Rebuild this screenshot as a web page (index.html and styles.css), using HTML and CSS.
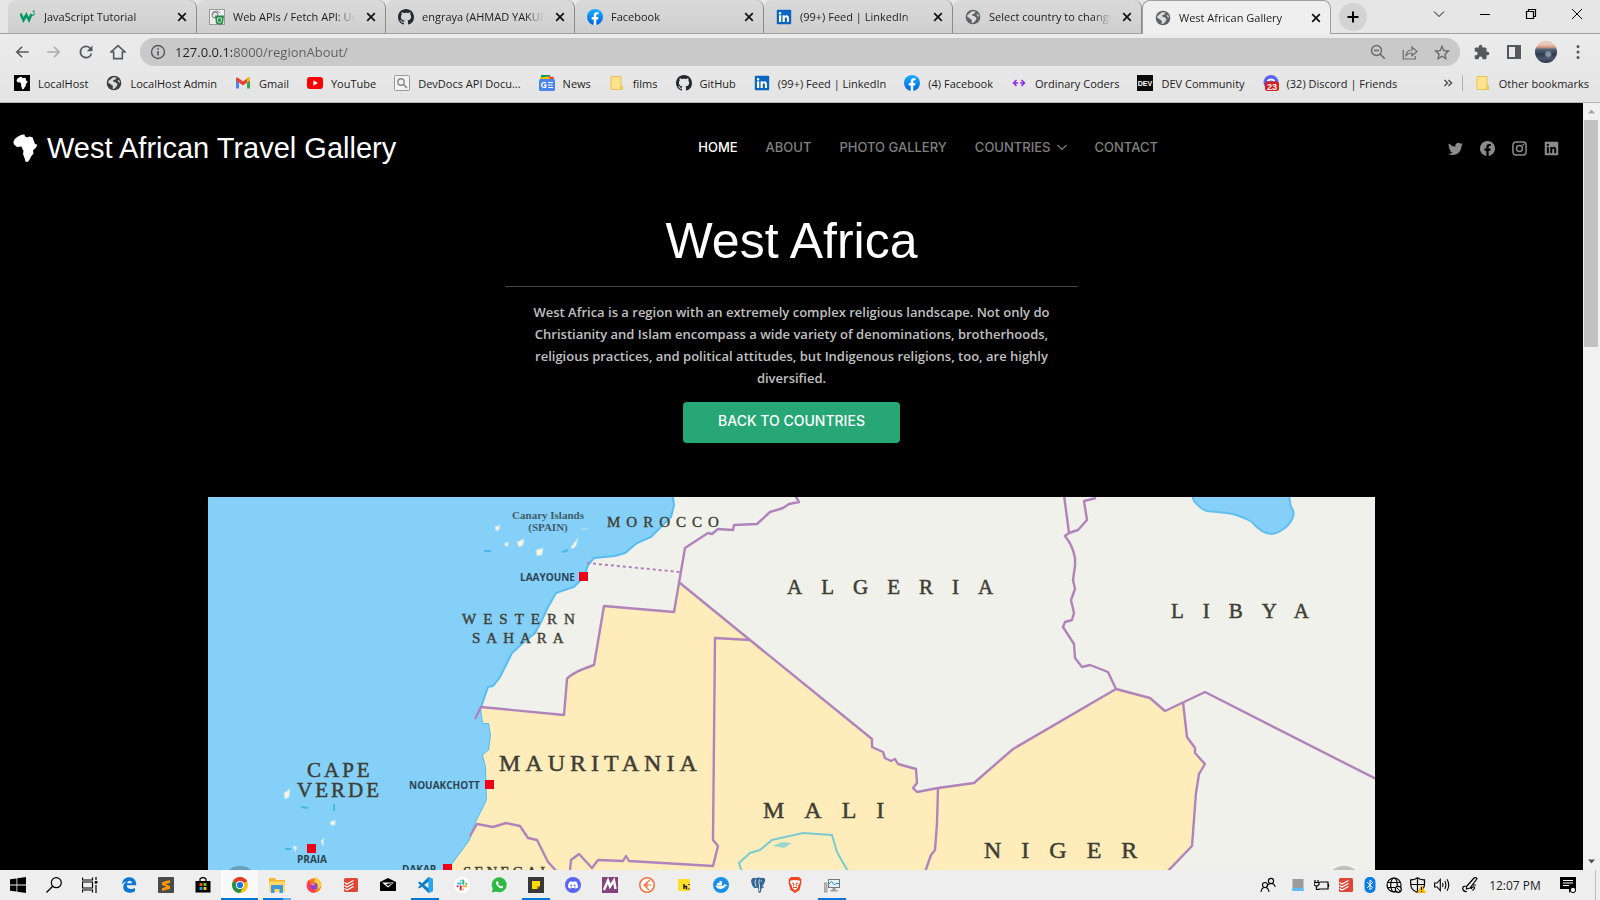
FILE: index.html
```html
<!DOCTYPE html>
<html lang="en">
<head>
<meta charset="utf-8">
<title>West African Gallery</title>
<link rel="stylesheet" href="styles.css">
</head>
<body>
<svg class="defs" aria-hidden="true">
  <defs>
    <linearGradient id="fbg" x1="0" y1="0" x2="0" y2="1"><stop offset="0" stop-color="#19afff"/><stop offset="1" stop-color="#0062e0"/></linearGradient>
    <symbol id="world" viewBox="0 0 16 16"><circle cx="8" cy="8" r="7.300" fill="currentColor"/><path d="M7 2.200 10.500 2.500 9.500 4.500 7.500 5 7 6.500 9.500 7.200 11.500 9 10.500 11.500 8 14 6.500 13.500 7 11 5 9.500 2 7.500 2.500 6 5 4z" fill="#dcdcdc"/><path d="M11.500 5 13.500 5.500 14 8 12.500 7z" fill="#dcdcdc"/></symbol>
    <symbol id="github" viewBox="0 0 16 16"><path fill="#24292f" d="M8 0C3.580 0 0 3.580 0 8c0 3.540 2.290 6.530 5.470 7.590.4.070.55-.17.55-.38 0-.19-.01-.82-.01-1.490-2.010.37-2.530-.49-2.690-.94-.09-.23-.48-.94-.82-1.130-.28-.15-.68-.52-.01-.53.63-.01 1.080.58 1.230.82.72 1.210 1.870.87 2.330.66.070-.52.28-.87.51-1.070-1.780-.2-3.640-.89-3.640-3.950 0-.87.31-1.590.82-2.150-.08-.2-.36-1.020.08-2.120 0 0 .67-.21 2.200.82.64-.18 1.320-.27 2-.27s1.360.09 2 .27c1.530-1.040 2.200-.82 2.200-.82.44 1.100.16 1.920.08 2.120.51.56.82 1.270.82 2.150 0 3.070-1.870 3.750-3.650 3.950.29.25.54.73.54 1.480 0 1.070-.01 1.930-.01 2.200 0 .21.15.46.55.38A8.010 8.010 0 0 0 16 8c0-4.420-3.580-8-8-8z"/></symbol>
    <symbol id="fb" viewBox="0 0 16 16"><path d="M16 8.049c0-4.446-3.582-8.050-8-8.050C3.580 0 0 3.603 0 8.050c0 4.017 2.926 7.347 6.750 7.951v-5.625h-2.030V8.050H6.750V6.275c0-2.017 1.195-3.131 3.022-3.131.876 0 1.791.157 1.791.157v1.980h-1.009c-.993 0-1.303.621-1.303 1.258v1.510h2.218l-.354 2.326H9.250V16c3.824-.604 6.750-3.934 6.750-7.951z" fill="currentColor"/></symbol>
    <symbol id="fbcolor" viewBox="0 0 16 16"><circle cx="8" cy="8" r="8" fill="url(#fbg)"/><path d="M6.750 16v-5.600H4.700V8.050h2.050V6.300c0-2 1.200-3.150 3-3.150.9 0 1.800.15 1.800.15v2h-1c-1 0-1.300.6-1.300 1.250v1.500h2.200l-.35 2.350H9.250V16z" fill="#fff"/></symbol>
    <symbol id="in" viewBox="0 0 16 16"><path fill="currentColor" fill-rule="evenodd" d="M1.500.8h13q.7 0 .7.7v13q0 .7-.7.7h-13q-.7 0-.7-.7v-13q0-.7.7-.7zM3 6.300V13h2.200V6.300zM4.100 3a1.250 1.250 0 1 0 0 2.500 1.250 1.250 0 0 0 0-2.500zM6.600 6.300V13h2.200V9.700c0-2 2.100-2 2.100 0V13H13V9.200c0-3.600-3.300-3.700-4.300-1.900v-1z"/></symbol>
    <symbol id="incolor" viewBox="0 0 16 16"><rect x="1" y="1" width="14" height="14" fill="#fff"/><use href="#in" color="#0a66c2"/></symbol>
    <symbol id="folder" viewBox="0 0 16 16"><path d="M2 1.500h10v13H2zM11.500 11h2v3.500h-2z" fill="#fee28c" stroke="#e8c252"/></symbol>
    <symbol id="x" viewBox="0 0 16 16"><path d="M4.200 4.200l7.600 7.600M11.800 4.200l-7.600 7.600" stroke="#111" stroke-width="1.700" fill="none"/></symbol>
    <symbol id="africa" viewBox="0 0 24 28"><path fill="#fff" d="M5 2.500 8.500.8 11.500.5 12 2.500 14.500 3.500 16 2.600 19.500 3.200 20.500 6 22 10 24 10.500 23.500 13 20 16.500 20.500 19.500 18.500 22 16 26.500 14.500 28 12.500 27.500 11.500 24 10 20 10.500 17 9 14 8.500 12.500 4 13 1 10.500.3 8 2 4.800z"/></symbol>
    <symbol id="todo" viewBox="0 0 16 16"><rect x="1" y="1" width="14" height="14" rx="1.500" fill="#de4638"/><path d="M1.500 5.500 4 7l6.500-3.500M1.500 8.500 4 10l6.500-3.500M1.500 11.500 4 13l6.500-3.500" stroke="#fff" stroke-width="1.200" fill="none"/></symbol>
  </defs>
</svg>

<header class="browser">
  <div class="tabstrip">
    <div class="tab"><svg class="ico" viewBox="0 0 16 16"><path d="M.5 4.500 3.500 11 6.300 5.800 9 11 11.500 5" fill="none" stroke="#059862" stroke-width="2.600"/><path d="M12.500 2h2l-1 1.800q2 .6.500 2.200-1 .8-2 0" fill="none" stroke="#059862"/></svg><span class="tab-name">JavaScript Tutorial</span><button class="close" aria-label="Close tab"><svg class="ico"><use href="#x"/></svg></button></div>
    <div class="tab"><svg class="ico" viewBox="0 0 16 16"><rect x=".5" y=".5" width="15" height="15" fill="#eee" stroke="#999"/><circle cx="6" cy="6" r="3" fill="none" stroke="#777"/><path d="M4 6V3l4-1 3 2" fill="none" stroke="#888"/><path d="M6 6.500h9l-1 8-3.500 1.500L7 14.500z" fill="#258a42"/><path d="M8.500 9h4l-.3 4-1.700.8-1.700-.8z" fill="none" stroke="#cfe8d4"/></svg><span class="tab-name">Web APIs / Fetch API: Using</span><button class="close" aria-label="Close tab"><svg class="ico"><use href="#x"/></svg></button></div>
    <div class="tab"><svg class="ico"><use href="#github"/></svg><span class="tab-name">engraya (AHMAD YAKUBU)</span><button class="close" aria-label="Close tab"><svg class="ico"><use href="#x"/></svg></button></div>
    <div class="tab"><svg class="ico"><use href="#fbcolor"/></svg><span class="tab-name">Facebook</span><button class="close" aria-label="Close tab"><svg class="ico"><use href="#x"/></svg></button></div>
    <div class="tab"><svg class="ico"><use href="#incolor"/></svg><span class="tab-name">(99+) Feed | LinkedIn</span><button class="close" aria-label="Close tab"><svg class="ico"><use href="#x"/></svg></button></div>
    <div class="tab"><svg class="ico grey"><use href="#world"/></svg><span class="tab-name">Select country to change</span><button class="close" aria-label="Close tab"><svg class="ico"><use href="#x"/></svg></button></div>
    <div class="tab active"><svg class="ico grey"><use href="#world"/></svg><span class="tab-name">West African Gallery</span><button class="close" aria-label="Close tab"><svg class="ico"><use href="#x"/></svg></button></div>
    <button class="newtab" aria-label="New tab"><svg class="ico" viewBox="0 0 16 16"><path d="M8 2.500v11M2.500 8h11" stroke="#000" stroke-width="2"/></svg></button>
    <div class="wincontrols">
      <button aria-label="Search tabs"><svg class="ico" viewBox="0 0 16 16"><path d="M3 5.500l5 5 5-5" fill="none" stroke="#111"/></svg></button>
      <button aria-label="Minimize"><svg class="ico" viewBox="0 0 16 16"><path d="M3 8.500h10" stroke="#000"/></svg></button>
      <button aria-label="Restore"><svg class="ico" viewBox="0 0 16 16"><path d="M3.500 5.500h7v7h-7zM5.500 5.500v-2h7v7h-2" fill="none" stroke="#000" stroke-width="1.200"/></svg></button>
      <button aria-label="Close"><svg class="ico" viewBox="0 0 16 16"><path d="M3 3l10 10M13 3L3 13" stroke="#000"/></svg></button>
    </div>
  </div>

  <div class="toolbar">
    <button aria-label="Back"><svg viewBox="0 0 24 24"><path d="M22 10.700H7l6-5.900L11.400 3.200 2.500 12l8.900 8.800 1.600-1.600-6-5.900h15z"/></svg></button>
    <button class="dim" aria-label="Forward"><svg viewBox="0 0 24 24"><path d="M2 10.700h15l-6-5.900 1.600-1.600 8.900 8.800-8.900 8.800-1.600-1.600 6-5.900H2z"/></svg></button>
    <button aria-label="Reload"><svg viewBox="0 0 24 24"><path d="M18.700 5.300A9.200 9.200 0 0 0 12 2.300a9.700 9.700 0 1 0 9.400 12h-2.700A7 7 0 1 1 12 5c1.900 0 3.700.8 4.900 2l-3.700 3.700h8.500V2.300z"/></svg></button>
    <button aria-label="Home"><svg viewBox="0 0 24 24"><path d="M12 2.500 1.500 12H5.500v10h13V12h4z" fill="none" stroke="#55585c" stroke-width="2.400"/></svg></button>
    <div class="omnibox">
      <svg viewBox="0 0 16 16"><circle cx="8" cy="8" r="6.500" fill="none" stroke="#55585c" stroke-width="1.400"/><path d="M8 7v4.500M8 4.200v1.600" stroke="#55585c" stroke-width="1.600"/></svg>
      <input class="url" type="text" aria-label="Address" value="127.0.0.1:8000/regionAbout/">
      <button aria-label="Zoom"><svg viewBox="0 0 16 16"><circle cx="6.500" cy="6.500" r="5" fill="none" stroke="#6a6a6a" stroke-width="1.400"/><path d="M4 6.500h5M10.200 10.200l4.600 4.600" stroke="#6a6a6a" stroke-width="1.600"/></svg></button>
      <button aria-label="Share"><svg viewBox="0 0 16 16"><path d="M1.200 6v9h12v-3M4 11.500c.5-4 2.500-5.500 6-5.500V3l5 4.500-5 4.300V9c-3 0-4.500.8-6 2.500z" fill="none" stroke="#6a6a6a" stroke-width="1.200"/></svg></button>
      <button aria-label="Bookmark"><svg viewBox="2 1 20 20"><path fill="#666" d="M22 9.240l-7.190-.62L12 2 9.190 8.630 2 9.240l5.460 4.730L5.820 21 12 17.270 18.180 21l-1.630-7.030L22 9.240zM12 15.400l-3.760 2.270 1-4.280-3.320-2.880 4.380-.38L12 6.100l1.710 4.040 4.380.38-3.320 2.880 1 4.280L12 15.400z"/></svg></button>
    </div>
    <button aria-label="Extensions"><svg viewBox="1 0 23 23"><path d="M20.500 11H19V7c0-1.100-.9-2-2-2h-4V3.500a2.500 2.500 0 0 0-5 0V5H4c-1.100 0-2 .9-2 2v3.800h1.500a2.700 2.700 0 0 1 0 5.400H2V20c0 1.100.9 2 2 2h3.800v-1.500a2.700 2.700 0 0 1 5.400 0V22H17c1.100 0 2-.9 2-2v-4h1.500a2.500 2.500 0 0 0 0-5z"/></svg></button>
    <button aria-label="Side panel"><svg viewBox="0 0 16 16"><path d="M1 1h14v14H1zM3 3v10h6V3z" fill-rule="evenodd"/></svg></button>
    <button class="profile" aria-label="Profile"></button>
    <button aria-label="Menu"><svg viewBox="0 0 16 16"><circle cx="8" cy="2.500" r="1.500"/><circle cx="8" cy="8" r="1.500"/><circle cx="8" cy="13.500" r="1.500"/></svg></button>
  </div>

  <nav class="bookmarks" aria-label="Bookmarks">
    <a href="#"><svg class="ico" viewBox="0 0 16 16"><rect width="16" height="16"/><use href="#africa" x="2" y="1.500" width="12" height="13"/></svg>LocalHost</a>
    <a href="#"><svg class="ico dark"><use href="#world"/></svg>LocalHost Admin</a>
    <a href="#"><svg class="ico" viewBox="0 0 16 16"><path d="M1 4v9.500h3V7z" fill="#4285f4"/><path d="M15 4v9.500h-3V7z" fill="#34a853"/><path d="M1 3.800Q1.200 2 3 2.800L8 6.500l5-3.700q1.800-.8 2 1V5.500L8 10.500 1 5.500z" fill="#ea4335"/><path d="M12 3.500Q15 1 15 4v1.500l-3 2.200z" fill="#fbbc04"/></svg>Gmail</a>
    <a href="#"><svg class="ico" viewBox="0 0 16 16"><rect y="2" width="16" height="12" rx="3" fill="#f00"/><path d="M6.300 5.200v5.600L11 8z" fill="#fff"/></svg>YouTube</a>
    <a href="#"><svg class="ico" viewBox="0 0 16 16"><rect x=".5" y=".5" width="15" height="15" rx="1" fill="#f2f2f2" stroke="#999"/><circle cx="7" cy="7" r="3.200" fill="none" stroke="#888" stroke-width="1.400"/><path d="M9.500 9.500l3.500 3.500" stroke="#888" stroke-width="1.600"/></svg>DevDocs API Docu...</a>
    <a href="#"><svg class="ico" viewBox="0 0 16 16"><path d="M2 0h9v5H2z" fill="#0c9d58"/><path d="M9 1.200l6 .8-1 4H6z" fill="#ea4335"/><path d="M1 2.500l9-1 1 4H1z" fill="#fbbc04"/><rect y="4" width="16" height="12" rx="1.500" fill="#4a86ee"/><path d="M9 7.500h5M9 10h4.500M9 12.500h5M7 8.300Q5 6.700 3.400 8.200 1.800 10 3.400 11.800 5.500 13.300 7 11.500V10.200H5" stroke="#fff" stroke-width="1.200" fill="none"/></svg>News</a>
    <a href="#"><svg class="ico"><use href="#folder"/></svg>films</a>
    <a href="#"><svg class="ico"><use href="#github"/></svg>GitHub</a>
    <a href="#"><svg class="ico"><use href="#incolor"/></svg>(99+) Feed | LinkedIn</a>
    <a href="#"><svg class="ico"><use href="#fbcolor"/></svg>(4) Facebook</a>
    <a href="#"><svg class="ico" viewBox="0 0 16 16"><path d="M5.500 5 2.500 8l3 3M10.500 5l3 3-3 3M2.500 8h4.500M9 8h4.500" fill="none" stroke="#8a2be8" stroke-width="1.500"/></svg>Ordinary Coders</a>
    <a href="#"><svg class="ico" viewBox="0 0 16 16"><rect width="16" height="16" fill="#0a0a0a"/><text class="devtext" x="8" y="11" text-anchor="middle">DEV</text></svg>DEV Community</a>
    <a href="#"><svg class="ico" viewBox="0 0 16 16"><circle cx="8" cy="7.500" r="7.500" fill="#5865f2"/><path d="M4.500 6q3.500-3 7 0" stroke="#fff" stroke-width="2" fill="none"/><rect x="2" y="6.500" width="14" height="9.500" rx="2.500" fill="#d8201f"/><text class="badgetext" x="9" y="15" text-anchor="middle">23</text></svg>(32) Discord | Friends</a>
    <button class="more" aria-label="More bookmarks"><svg class="ico" viewBox="0 0 16 16"><path d="M4.500 5l3 3-3 3M8.500 5l3 3-3 3" fill="none" stroke="#555" stroke-width="1.500"/></svg></button>
    <a class="other" href="#"><svg class="ico"><use href="#folder"/></svg>Other bookmarks</a>
  </nav>
</header>

<div class="viewport">
  <main class="page">
    <div class="site-header">
      <a class="brand" href="#"><svg><use href="#africa"/></svg>West African Travel Gallery</a>
      <nav class="site-nav" aria-label="Main">
        <a class="current" href="#">Home</a>
        <a href="#">About</a>
        <a href="#">Photo Gallery</a>
        <a href="#">Countries<svg viewBox="0 0 10 10"><path d="M.5 3 5 7.500 9.500 3" fill="none" stroke="currentColor" stroke-width="1.100"/></svg></a>
        <a href="#">Contact</a>
      </nav>
      <div class="social">
        <a href="#" aria-label="Twitter"><svg viewBox="0 0 16 16"><path fill="currentColor" d="M5.026 15c6.038 0 9.341-5.003 9.341-9.334 0-.14 0-.282-.006-.422A6.685 6.685 0 0 0 16 3.542a6.658 6.658 0 0 1-1.889.518 3.301 3.301 0 0 0 1.447-1.817 6.533 6.533 0 0 1-2.087.793A3.286 3.286 0 0 0 7.875 6.030a9.325 9.325 0 0 1-6.767-3.429 3.289 3.289 0 0 0 1.018 4.382A3.323 3.323 0 0 1 .64 6.575v.045a3.288 3.288 0 0 0 2.632 3.218 3.203 3.203 0 0 1-.865.115 3.230 3.230 0 0 1-.614-.057 3.283 3.283 0 0 0 3.067 2.277A6.588 6.588 0 0 1 .78 13.580a6.320 6.320 0 0 1-.78-.045A9.344 9.344 0 0 0 5.026 15z"/></svg></a>
        <a href="#" aria-label="Facebook"><svg><use href="#fb"/></svg></a>
        <a href="#" aria-label="Instagram"><svg viewBox="0 0 16 16"><rect x="1" y="1" width="14" height="14" rx="3.500" fill="none" stroke="currentColor" stroke-width="1.600"/><circle cx="8" cy="8" r="3.200" fill="none" stroke="currentColor" stroke-width="1.500"/><circle cx="12" cy="4" r="1" fill="currentColor"/></svg></a>
        <a href="#" aria-label="LinkedIn"><svg><use href="#in"/></svg></a>
      </div>
    </div>

    <section class="intro">
      <h1>West Africa</h1>
      <p>West Africa is a region with an extremely complex religious landscape. Not only do Christianity and Islam encompass a wide variety of denominations, brotherhoods, religious practices, and political attitudes, but Indigenous religions, too, are highly diversified.</p>
      <a class="cta" href="#">Back to Countries</a>
    </section>

    <figure class="map">
      <svg viewBox="208 497 1167 403" role="img" aria-label="Map of West Africa">
        <rect x="208" y="497" width="1167" height="403" fill="#85d0f8"/>
        <path fill="#f1f1eb" stroke="#55bdf0" stroke-width="2" d="M672 490 674 505 671 517 661 527 651 537 637 543 625 553 615 556 594 558 588 565 584 577 574 587 556 593 548 607 541 622 535 633 524 642 512 653 505 667 500 677 493 686 488 687 481 707 483 723 489 723 491 735 489 750 483 755 486 767 487 800 476 822 470 840 453 863 441 873 430 910H1385V490z"/>
        <path fill="#feedba" d="M481 707 564 715 567 679Q571 673 594 665L604 606 674 612 680 583 750 640 872 739V747L883 752 885 758 891 761 895 759 898 764 916 769 917 783 913 788 917 792 938 788 974 783 1013 749 1116 689 1150 698 1165 711 1183 702 1187 737 1195 748V753L1205 764 1199 774 1196 793 1192 846 1168 870 1150 888 1140 910H430L441 873 453 863 470 840 476 822 487 800 486 767 483 755 489 750 491 735 489 723 483 723z"/>
        <path fill="#85d0f8" stroke="#62c0ef" stroke-width="2" d="M1190 490 1194 501Q1200 509 1207 511L1227 513Q1240 515 1252 522 1262 534 1272 534 1282 532 1289 524 1297 514 1291 507L1288 490z"/>
        <g fill="none" stroke="#b183bb" stroke-width="2.400" stroke-linejoin="round">
          <path d="M475 719 481 707 564 715 567 679Q571 673 594 665L604 606 674 612 685 548 708 533 712 534 718 529 733 530 734 525 757 524 770 512 783 508 789 504 799 502 795 495"/>
          <path d="M680 583 750 640 872 739V747L883 752 885 758 891 761 895 759 898 764 916 769 917 783 913 788 917 792 938 788 974 783 1013 749 1116 689 1150 698 1165 711 1205 692 1380 781"/>
          <path d="M1183 702 1187 737 1195 748V753L1205 764 1199 774 1196 793 1192 846 1140 900"/>
          <path d="M750 640 715 638 713 840 718 846 713 866 629 861 626 856 623 861 598 860 592 868 579 854 571 860 569 880"/>
          <path d="M470 836 477 824 493 827 506 823 520 826 528 838 537 840 548 862 560 875"/>
          <path d="M938 788 937 823 935 850 931 855 924 875"/>
          <path d="M1064 495 1069 533 1078 530 1087 520 1084 501 1096 498M1069 533 1065 536Q1073 546 1075 558V566L1073 580 1075 589 1071 600 1074 613 1072 620 1065 622 1063 627 1074 644 1075 658 1082 667 1090 665 1108 672 1116 689"/>
          <path d="M587 563 680 572" stroke-width="2" stroke-dasharray="3 3"/>
        </g>
        <path d="M742 872 739 863 750 853 760 850 772 840 803 833 832 835 837 852 850 875" fill="none" stroke="#79cbd0" stroke-width="2"/>
        <path d="M773 846 782 842 792 843 784 848z" fill="#9bd5cb"/>
        <g fill="#f7f6e2" stroke="#bfe3ee"><path d="M517 542 524 539 523 545 519 547zM536 550 543 548 542 555 537 556zM571 547 578 538 576 546 572 549zM495 527 500 525 499 530 496 531zM581 529 588 529M505 543 508 542 508 546 505 546zM284 793 290 789 289 797 285 799zM330 822 335 820 335 825 331 825zM293 846 297 847 295 852zM321 841 324 838 323 846z"/></g>
        <path d="M484 551h7M562 552l6-2M301 807l7 1M334 804v7M285 849h6" stroke="#46b7ea" stroke-width="2"/>
        <g fill="#ed0017"><rect x="579" y="572" width="9" height="9"/><rect x="485" y="780" width="9" height="9"/><rect x="307" y="844" width="9" height="9"/><rect x="443" y="864" width="9" height="9"/></g>
        <g class="country big" stroke-width=".5"><text class="sp5" x="499" y="771">MAURITANIA</text><text class="sp20" x="763" y="818">MALI</text><text class="sp20" x="984" y="858">NIGER</text></g>
        <g class="country mid" stroke-width=".5"><text class="sp19" x="787" y="594">ALGERIA</text><text class="sp19" x="1171" y="618">LIBYA</text><text class="sp3" x="307" y="777">CAPE</text><text class="sp3" x="297" y="797">VERDE</text></g>
        <g class="country small" stroke-width=".4"><text class="sp6" x="607" y="527">MOROCCO</text><text class="sp7" x="462" y="624">WESTERN</text><text class="sp6" x="472" y="643">SAHARA</text><text class="sp3" x="463" y="877">SENEGAL</text></g>
        <g class="isles"><text x="548" y="519" text-anchor="middle">Canary Islands</text><text x="548" y="531" text-anchor="middle">(SPAIN)</text></g>
        <g class="city"><text x="520" y="581">LAAYOUNE</text><text x="409" y="789">NOUAKCHOTT</text><text x="297" y="863">PRAIA</text><text x="402" y="873">DAKAR</text></g>
        <circle cx="240" cy="884" r="18" fill="#6c9fbc"/><circle cx="1344" cy="884" r="18" fill="#c0c0ba"/>
      </svg>
    </figure>
  </main>
  <div class="scrollbar" aria-hidden="true">
    <svg viewBox="0 0 17 17"><path d="M5 10.500h7L8.500 6.500z" fill="#a3a3a3"/></svg>
    <div class="thumb"></div>
    <svg viewBox="0 0 17 17"><path d="M5 6.500h7l-3.500 4z" fill="#505050"/></svg>
  </div>
</div>

<footer class="taskbar">
  <div class="system">
    <button aria-label="Start"><svg viewBox="0 0 16 16"><path d="M0 2.300 6.500 1.400v6.200H0zM7.300 1.300 16 0v7.600H7.300zM0 8.400h6.500v6.200L0 13.700zM7.300 8.400H16V16l-8.700-1.300z"/></svg></button>
    <button aria-label="Search"><svg viewBox="0 0 16 16"><circle cx="10.300" cy="5.700" r="5" fill="none" stroke="#000" stroke-width="1.200"/><path d="M6.700 9.300.5 15.500" stroke="#000" stroke-width="1.300"/></svg></button>
    <button aria-label="Task view"><svg viewBox="0 0 16 16"><path d="M.5.500V3h10V.5M.5 15.500V13h10v2.500M.5 5h10v6H.5zM14 0v3M14 8v8" fill="none" stroke="#000" stroke-width="1.200"/><path d="M12.800 4h2.600v2.600h-2.600z"/></svg></button>
  </div>
  <div class="apps">
    <button aria-label="Edge"><svg viewBox="0 0 16 16"><path d="M.8 7.500C1.500 2.500 4.500.3 8.200.3c4.500 0 7.200 3 7 7.900H5.700c.2 4 5 4.700 8.300 2.800v3.200C8.500 17.300 2 15.500 2.300 10 2.300 7.500 3.500 5.700 5.700 4.500 3.500 4.700 2 5.800.8 7.500zM6 6.200h5C11 2.800 6.500 2.900 6 6.200z" fill="#0a78d4" fill-rule="evenodd"/></svg></button>
    <button aria-label="Sublime Text"><svg viewBox="0 0 16 16"><rect width="16" height="16" rx="1" fill="#4a4a4a"/><path d="M12 3v2.700L7.500 7.200 12 9v2.700L4 14v-2.700l4.500-1.500L4 8V5.300z" fill="#ff9800"/></svg></button>
    <button aria-label="Microsoft Store"><svg viewBox="0 0 16 16"><path d="M.5 4h15v11.500H.5z"/><path d="M5 4V2q3-3 6 0v2" stroke="#000" fill="none" stroke-width="1.200"/><path d="M4.500 6h3v3h-3z" fill="#f25022"/><path d="M8.500 6h3v3h-3z" fill="#7fba00"/><path d="M4.500 10h3v3h-3z" fill="#00a4ef"/><path d="M8.500 10h3v3h-3z" fill="#ffb900"/></svg></button>
    <button class="focus" aria-label="Chrome"><svg viewBox="0 0 16 16"><circle cx="8" cy="8" r="8" fill="#fbc116"/><path d="M8 8 1.100 4A8 8 0 0 1 14.900 4z" fill="#e33b2e"/><path d="M8 8 1.100 4A8 8 0 0 0 8 16l3.500-6z" fill="#229342"/><path d="M8 4h7" stroke="#e33b2e"/><circle cx="8" cy="8" r="4" fill="#fff"/><circle cx="8" cy="8" r="3.100" fill="#1a73e8"/></svg></button>
    <button class="open stack" aria-label="File Explorer"><svg viewBox="0 0 16 16"><path d="M0 1h6l1 2h9v12H0z" fill="#f5b52a"/><path d="M0 4.500h16V15H0z" fill="#ffd869"/><path d="M2 8h12v8h-3.500v-4h-5v4H2z" fill="#3f97dc"/></svg></button>
    <button aria-label="Firefox"><svg viewBox="0 0 16 16"><circle cx="8" cy="8.500" r="7.300" fill="#ff7a1c"/><path d="M8 15.800A7.300 7.300 0 0 1 .8 8L2 3.500 4.500 5l5 10z" fill="#ff3b53"/><path d="M9.500 0q6 3.500 5.800 8.500l-3 4L8 5z" fill="#ffcf38"/><circle cx="8" cy="9" r="3.600" fill="#8a3fe0"/><path d="M4 6.500 7.500 6l2 1.500-3 1z" fill="#ff9a1f"/></svg></button>
    <button aria-label="Todoist"><svg><use href="#todo"/></svg></button>
    <button aria-label="Mail"><svg viewBox="0 0 16 16"><path d="M0 5 8 1l8 4v9H0z"/><path d="M2 5.500h12L8 10.500z" fill="#fff"/><path d="M6 7l2 2 5-3z" fill="#000"/></svg></button>
    <button class="open" aria-label="VS Code"><svg viewBox="0 0 16 16"><path d="M11.500 0 16 2v12l-4.500 2L1 5.800 2.500 4.500 11.800 11.500V4.500L2.500 11.500 1 10.200z" fill="#0d80cc"/><path d="M11.500 0 16 2v12l-4.500 2z" fill="#29a6ee"/></svg></button>
    <button aria-label="Slack"><svg viewBox="0 0 16 16"><circle cx="8" cy="8" r="8" fill="#fff"/><g fill="none" stroke-width="2" stroke-linecap="round"><path d="M4 6.500h3M6.700 3.500v.1" stroke="#36c5f0"/><path d="M9.300 3.500v3.200M12.300 6.700h.1" stroke="#2eb67d"/><path d="M9.300 9.300h3M9.300 12.400v.1" stroke="#ecb22e"/><path d="M6.700 9.300v3.200M3.700 9.300h.1" stroke="#e01e5a"/></g></svg></button>
    <button aria-label="WhatsApp"><svg viewBox="0 0 16 16"><circle cx="8.200" cy="7.800" r="7.500" fill="#2fb944"/><path d="M.8 15.500 2 11l3.500 3.500z" fill="#2fb944"/><path d="M5.500 4.500Q4 6 6.500 9t5 2l.7-1.500-2-1-1 .8Q7.500 8.500 7 7l.7-1L7 4.200z" fill="#fff"/></svg></button>
    <button class="open" aria-label="Sticky Notes"><svg viewBox="0 0 16 16"><rect width="16" height="16" fill="#383838"/><path d="M4 4h8v5L9 12H4z" fill="#fd0"/><path d="M12 9H9v3z" fill="#a98f00"/></svg></button>
    <button aria-label="Discord"><svg viewBox="0 0 16 16"><circle cx="8" cy="8" r="8" fill="#5865f2"/><path transform="translate(3 3) scale(.625)" fill="#fff" d="M13.500 2.900A13 13 0 0 0 10.300 1.900L9.800 2.800a12 12 0 0 0-3.700 0L5.700 1.900A13 13 0 0 0 2.400 2.900C.4 6-.2 9 .1 12a13 13 0 0 0 4 2l.9-1.300-1.300-.7.3-.3c2.600 1.200 5.500 1.200 8 0l.3.3-1.300.7.9 1.300a13 13 0 0 0 4-2c.3-3.500-.6-6.400-2.400-9.100zM5.300 10.200c-1.900-.2-1.900-3 0-3.200 1.900.2 1.900 3 0 3.200zm5.400 0c-1.900-.2-1.900-3 0-3.200 1.900.2 1.900 3 0 3.200z"/></svg></button>
    <button aria-label="Media"><svg viewBox="0 0 16 16"><rect width="16" height="16" fill="#85437c"/><path d="M2 13 6 3.500 8 9.500l4-6L13.500 12" fill="none" stroke="#fff" stroke-width="2.400"/></svg></button>
    <button aria-label="Postman"><svg viewBox="0 0 16 16"><circle cx="8" cy="8" r="7.200" fill="#fff" stroke="#fa7040" stroke-width="1.600"/><path d="M11 3 5 8l5 5M6 8h6M8 6v4" fill="none" stroke="#fa7040" stroke-width="1.200"/></svg></button>
    <button aria-label="Notes"><svg viewBox="0 0 16 16"><rect x="2" y="2" width="12" height="12" rx="1" fill="#ffdf25"/><path d="M8 7v5M8 9.500h2.500v3M13 7v1M13 11.500v1" stroke="#111" stroke-width="1.400" fill="none"/></svg></button>
    <button aria-label="Docker"><svg viewBox="0 0 16 16"><circle cx="8" cy="8" r="8" fill="#1a90ea"/><path d="M2.500 8.500H11l.8-2 1 1.500h1.500c-.5 1-1.300 1.300-2 1.300C10 13 4 13 2.500 8.500zM4 6h5v2H4zM6.500 4h2.300v2H6.500z" fill="#fff"/></svg></button>
    <button aria-label="PostgreSQL"><svg viewBox="0 0 16 16"><path d="M1 4Q2-.5 6 1.200 8.500-.3 11 1q5-.8 4 3-1.200 4-3 5.500l2.500.5-3 1.500-.7 3.800-2 .7-.8-5.300-2 .3Q2.500 12 1 4z" fill="#336791"/><path d="M5.500 2.500Q4.500 7 6 9.500M9.500 2.500Q8 5 9.500 8v6M10.500 4h1.500" fill="none" stroke="#dfe8f0" stroke-width=".9"/></svg></button>
    <button aria-label="Brave"><svg viewBox="0 0 16 16"><path d="M4 0h8l2.500 2.500-.5 1.500.5 1-2 8L8 16l-4.500-3-2-8 .5-1-.5-1.500z" fill="#f4421f"/><path d="M3.500 3.500 8 3l4.500.5.500 2-2 3.500v1.500L8 13.500l-3-3V9L3 5.500z" fill="#fff"/><path d="M5 6l2 .5-.5 2.500M11 6 9 6.500 9.500 9M6 10.500h4" stroke="#f4421f" fill="none"/></svg></button>
    <button class="open" aria-label="Monitor"><svg viewBox="0 0 16 16"><path d="M0 6h3v9H0z" fill="#bbb" stroke="#888" stroke-width=".7"/><rect x="4.500" y="2.500" width="11" height="8" fill="#e5f3f8" stroke="#777"/><path d="M5 7l2.500-2.500L10.500 8 12 6.500h3" fill="none" stroke="#2488c0"/><path d="M8.500 11h3v2h2v1.500h-7V13h2z" fill="#999"/></svg></button>
  </div>
  <div class="tray">
    <button class="people" aria-label="People"><svg viewBox="0 0 16 16"><g fill="none" stroke="#000" stroke-width="1.100"><circle cx="11" cy="4" r="2.600"/><circle cx="5" cy="8" r="2.500"/><path d="M7 10q1-3.500 4-3.500 3.500 0 4.200 3.500M1 15q.5-4.500 4-4.500T9 15"/></g></svg></button>
    <button aria-label="Memory"><svg viewBox="0 0 16 16"><rect x="2.500" y="2" width="11" height="12" fill="#9c9c9c"/><rect x="2.500" y="11" width="11" height="3" fill="#5cbcff"/></svg></button>
    <button aria-label="Battery"><svg viewBox="0 0 16 16"><path d="M5.500 5H14v7H4.500M14.500 7v3M1 3v2M4 3v2M0 5.500h5v2L3.500 9h-2L0 7.500zM2.500 9v3.500h3" fill="none" stroke="#000" stroke-width="1.200"/></svg></button>
    <button aria-label="Todoist"><svg><use href="#todo"/></svg></button>
    <button aria-label="Bluetooth"><svg viewBox="0 0 16 16"><rect x="2.500" width="11" height="16" rx="5" fill="#0a7cea"/><path d="M5.200 5.200 10.500 10.500 8 13V3l2.500 2.500L5.200 10.800" fill="none" stroke="#fff"/></svg></button>
    <button aria-label="Network"><svg viewBox="0 0 16 16"><g fill="none" stroke="#000" stroke-width="1.200"><circle cx="8" cy="8" r="7"/><ellipse cx="8" cy="8" rx="3.300" ry="7"/><path d="M1.500 5.500h13M1.500 10.500H9"/></g><circle cx="12.300" cy="12.300" r="3" fill="#eee" stroke="#000" stroke-width="1.200"/><path d="M10.500 10.500l3.700 3.700" stroke="#000"/></svg></button>
    <button aria-label="Security"><svg viewBox="0 0 16 16"><path d="M7.500.8Q10 3 14.500 2.800V7q0 6-7 8.500Q.7 13 .7 7V2.800Q5 3 7.500.8zM7.500 1v14M.8 7.500h13.500" fill="none" stroke="#000" stroke-width="1.200"/><path d="M11.500 7.500 16 16H7z" fill="#fdb900"/><path d="M11.500 10v3M11.500 14v1" stroke="#000"/></svg></button>
    <button aria-label="Volume"><svg viewBox="0 0 16 16"><path d="M.6 6h2.500l3.200-3.500v11L3.100 10H.6zM8.500 6q1 2 0 4M10.800 4q2.200 4 0 8M13 2.300q3.500 5.700 0 11.400" fill="none" stroke="#000" stroke-width="1.100"/></svg></button>
    <button class="pen" aria-label="Windows Ink"><svg viewBox="0 0 16 16"><path d="M4.500 9.500 12 1q2-1.200 3 .8L8 11l-3.500 1zM4.500 9Q0 9 .8 12t4 2.500M9 12q1.500-3 3-2t-1.500 3.500M11 8h3" fill="none" stroke="#000" stroke-width="1.200"/></svg></button>
    <span class="clock">12:07 PM</span>
    <button class="notify" aria-label="Notifications"><svg viewBox="0 0 16 16"><path d="M0 0h16v12h-3.500L9 16v-4H0z"/><path d="M3 3.500h10M3 6h10M3 8.500h6" stroke="#fff"/><circle cx="13" cy="13" r="2.700" fill="#eee" stroke="#000"/></svg></button>
  </div>
</footer>
</body>
</html>
```

FILE: styles.css
```css
* { box-sizing: border-box; }
body {
  margin: 0;
  height: 100vh;
  display: flex;
  flex-direction: column;
  overflow: hidden;
  background: #000;
  font-family: "Open Sans", "Noto Sans", sans-serif;
  font-size: 11px;
  color: #1c1c1c;
}
button {
  border: 0;
  padding: 0;
  background: none;
  font: inherit;
  color: inherit;
  display: flex;
  align-items: center;
  justify-content: center;
}
a { color: inherit; text-decoration: none; }
svg { display: block; flex: none; }
.defs { position: absolute; width: 0; height: 0; }
.ico { width: 16px; height: 16px; }
.grey { color: #5f6368; }
.dark { color: #3c4043; }

/* Browser chrome */
.browser { flex: none; background: linear-gradient(#efefef, #e4e4e4); border-bottom: 1px solid #b5b5b5; }
.tabstrip {
  display: flex;
  height: 34px;
  padding-left: 8px;
  background: #e6e6e6;
  box-shadow: inset 0 -1px #a0a0a0;
}
.tab {
  flex: 0 1 189px;
  min-width: 0;
  display: flex;
  align-items: center;
  gap: 8px;
  height: 33px;
  padding: 0 6px 0 12px;
  background: linear-gradient(#dadada, #cfcfcf);
  border-radius: 8px 8px 0 0;
  border-right: 1px solid #8a8a8a;
}
.tab-name {
  flex: 1;
  overflow: hidden;
  white-space: nowrap;
  -webkit-mask-image: linear-gradient(90deg, #000 85%, transparent);
  mask-image: linear-gradient(90deg, #000 85%, transparent);
}
.tab.active {
  height: 34px;
  background: #efefef;
  border: 1px solid #a0a0a0;
  border-bottom: 0;
}
.newtab {
  width: 28px;
  height: 28px;
  margin: 3px 0 0 8px;
  border-radius: 50%;
  background: #d3d3d3;
}
.wincontrols { display: flex; margin-left: auto; height: 28px; }
.wincontrols button { width: 46px; }

.toolbar { display: flex; align-items: center; height: 36px; padding: 0 6px; }
.toolbar > button { width: 32px; height: 28px; }
.toolbar svg { width: 16px; height: 16px; fill: #55585c; }
.toolbar .dim svg { fill: #aaa; }
.omnibox {
  flex: 1;
  display: flex;
  align-items: center;
  height: 28px;
  margin: 0 6px;
  padding: 0 2px 0 10px;
  border-radius: 14px;
  background: #c9c9c9;
}
.omnibox button { width: 32px; }
.url {
  flex: 1;
  border: 0;
  padding: 0 0 0 9px;
  outline: 0;
  font: 13px/20px "Open Sans", "Noto Sans", sans-serif;
  background: linear-gradient(90deg, #222 66px, #5c5c5c 66px);
  -webkit-background-clip: text;
  background-clip: text;
  color: transparent;
}
.toolbar .profile {
  width: 22px;
  height: 22px;
  margin: 0 5px;
  border-radius: 50%;
  background:
    radial-gradient(circle at 60% 60%, #8793a3 0 2px, transparent 4px),
    linear-gradient(#e7c9bb 0 15%, #d99a83 28%, #56647c 38%, #2c3a52 60%, #4a566b 80%, #2b3548);
}

.bookmarks { display: flex; align-items: center; gap: 18px; height: 32px; padding: 0 11px 6px 14px; white-space: nowrap; }
.bookmarks a { display: flex; align-items: center; gap: 8px; }
.bookmarks .more { margin-left: auto; }
.bookmarks .other { margin-left: -12px; padding-left: 12px; border-left: 1px solid #b0b0b0; }
.devtext { font: bold 7px "Liberation Sans", sans-serif; fill: #fff; }
.badgetext { font: bold 9px "Liberation Sans", sans-serif; fill: #fff; }

/* Web page */
.viewport { flex: 1; min-height: 0; display: flex; background: #000; }
.page { flex: 1; min-width: 0; overflow: hidden; }
.scrollbar { width: 17px; display: flex; flex-direction: column; background: #f1f1f1; }
.scrollbar svg { width: 17px; height: 17px; }
.thumb { height: 227px; margin: 0 2px auto 1px; background: #c1c1c1; }

.site-header { display: flex; align-items: center; justify-content: space-between; padding: 24px 24px 0 12px; }
.brand { display: flex; align-items: center; gap: 9px; font: 29px/42px "Liberation Sans", Arial, sans-serif; color: #fff; white-space: nowrap; }
.brand svg { width: 26px; height: 28px; }
.site-nav { display: flex; gap: 28px; padding: 0 0 2px 12px; font: 500 13px/40px Inter, sans-serif; text-transform: uppercase; color: #808080; }
.site-nav a { display: flex; align-items: center; gap: 6px; white-space: nowrap; }
.site-nav svg { width: 10px; height: 10px; }
.site-nav .current { color: #fff; }
.social { display: flex; gap: 17px; color: #8c8c8c; }
.social svg { width: 15px; height: 15px; }

.intro { max-width: 573px; margin: 0 auto; text-align: center; }
.intro h1 { margin: 0; padding: 42px 0 15px; border-bottom: 1px solid #444; font: 50px/60px "Liberation Sans", Arial, sans-serif; color: #fff; }
.intro p { margin: 14px 0 13px; padding: 0 16px; font: 600 13px/22px "Open Sans", "Noto Sans", sans-serif; color: #c0c0c0; }
.cta {
  display: inline-block;
  padding: 0 35px 3px;
  border-radius: 4px;
  background: #27a776;
  color: #fff;
  font: 500 14px/38px Inter, sans-serif;
  text-transform: uppercase;
}

.map { max-width: 1167px; margin: 54px auto 0; }
.map svg { width: 100%; height: auto; }
.country { font-family: "Liberation Serif", "Times New Roman", serif; fill: #3e3e35; stroke: #3e3e35; }
.big { font-size: 24px; }
.mid { font-size: 21px; }
.small { font-size: 15px; }
.sp3 { letter-spacing: 3px; }
.sp5 { letter-spacing: 5px; }
.sp6 { letter-spacing: 6px; }
.sp7 { letter-spacing: 7px; }
.sp19 { letter-spacing: 19px; }
.sp20 { letter-spacing: 20px; }
.isles { font: bold 11px "Liberation Serif", "Times New Roman", serif; fill: #3f5c68; }
.city { font: bold 10px "Open Sans", sans-serif; fill: #2c4552; }

/* Taskbar */
.taskbar { flex: none; display: flex; height: 30px; background: #eee; }
.taskbar svg { width: 16px; height: 16px; }
.system, .apps, .tray { display: flex; }
.system button { width: 36px; }
.apps { margin-left: 2px; }
.apps button { width: 37px; border-top: 2px solid transparent; border-bottom: 2px solid transparent; }
.apps .open { background: linear-gradient(#0078d7, #0078d7) center bottom / 28px 2px no-repeat border-box; }
.apps .stack { background: linear-gradient(90deg, #0078d7 20px, #66b0ea 20px) center bottom / 28px 2px no-repeat border-box; }
.apps .focus { background: #f9f9f9 border-box; border-bottom-color: #0078d7; }
.tray {
  margin-left: auto;
  align-items: center;
  padding-right: 8px;
  background: linear-gradient(#bbb, #bbb) right 4px top / 1px 30px no-repeat;
}
.tray button { width: 24px; }
.tray .people { width: 36px; }
.tray .pen { width: 32px; }
.clock { width: 58px; text-align: center; font-size: 12px; white-space: nowrap; }
.tray .notify { width: 48px; height: 30px; }
```
